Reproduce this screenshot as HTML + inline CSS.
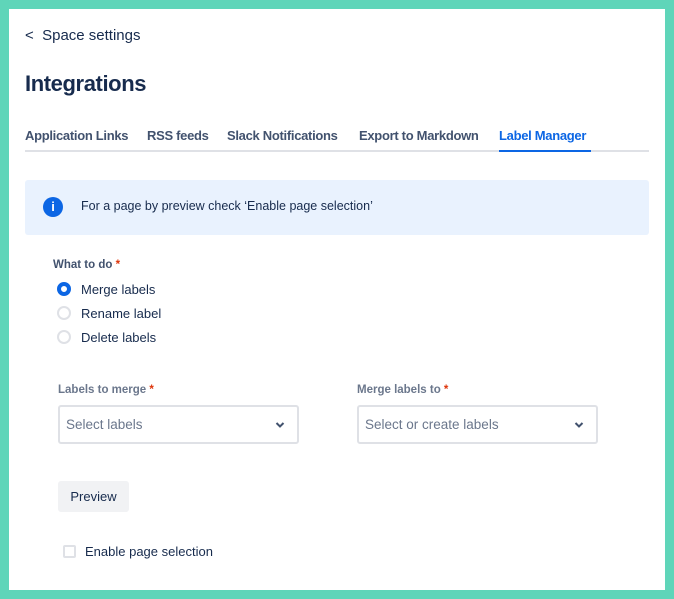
<!DOCTYPE html>
<html><head><style>
*{margin:0;padding:0;box-sizing:border-box}
body{width:674px;height:599px;background:#5fd5b9;font-family:"Liberation Sans",sans-serif;position:relative;overflow:hidden;color:#172b4d}
#p{position:absolute;left:9px;top:9px;width:656px;height:581px;background:#fff}
.a{position:absolute;white-space:nowrap}
.tab{position:absolute;top:128px;font-size:13px;color:#42526e;font-weight:bold;letter-spacing:-0.3px}
.r{position:absolute;width:14px;height:14px;border-radius:50%;border:2px solid #dfe1e6;left:57px}
.sel{position:absolute;top:405px;height:39px;border:2px solid #dfe1e6;border-radius:3px;font-size:13.5px;color:#6b778c;padding:10px 0 0 6px}
.lab{position:absolute;top:384px;font-size:11.5px;color:#6b778c;font-weight:bold}
.st{color:#de350b}
.t{font-size:13px}
</style></head><body>
<div id="p"></div>
<div class="a" style="left:25px;top:27px;font-size:15px;color:#172b4d">&lt;&nbsp; Space settings</div>
<div class="a" style="left:25px;top:71px;font-size:22px;font-weight:bold;color:#172b4d;letter-spacing:-0.4px">Integrations</div>
<div class="tab" style="left:25px">Application Links</div>
<div class="tab" style="left:147px">RSS feeds</div>
<div class="tab" style="left:227px">Slack Notifications</div>
<div class="tab" style="left:359px">Export to Markdown</div>
<div class="tab" style="left:499px;color:#0c66e4">Label Manager</div>
<div class="a" style="left:25px;top:150px;width:624px;height:2px;background:#dfe1e6"></div>
<div class="a" style="left:499px;top:150px;width:92px;height:2px;background:#0c66e4"></div>
<div class="a" style="left:25px;top:180px;width:624px;height:55px;background:#e9f2fe;border-radius:3px"></div>
<div class="a" style="left:43px;top:197px;width:20px;height:20px;border-radius:50%;background:#0c66e4;color:#fff;font-weight:bold;font-size:13px;text-align:center;line-height:20px">i</div>
<div class="a" style="left:81px;top:199px;font-size:12.5px;color:#172b4d">For a page by preview check ‘Enable page selection’</div>
<div class="a" style="left:53px;top:259px;font-size:11.5px;color:#42526e;font-weight:bold">What to do <span class="st">*</span></div>
<div class="r" style="top:282px;border:4px solid #0c66e4;background:#fff"></div>
<div class="r" style="top:306px"></div>
<div class="r" style="top:330px"></div>
<div class="a t" style="left:81px;top:282px">Merge labels</div>
<div class="a t" style="left:81px;top:306px">Rename label</div>
<div class="a t" style="left:81px;top:330px">Delete labels</div>
<div class="lab" style="left:58px">Labels to merge <span class="st">*</span></div>
<div class="lab" style="left:357px">Merge labels to <span class="st">*</span></div>
<div class="sel" style="left:58px;width:241px">Select labels<svg style="position:absolute;right:12px;top:14px" width="10" height="8" viewBox="0 0 10 8"><path d="M1.5 2l3.5 3.5L8.5 2" stroke="#42526e" stroke-width="2" fill="none"/></svg></div>
<div class="sel" style="left:357px;width:241px">Select or create labels<svg style="position:absolute;right:12px;top:14px" width="10" height="8" viewBox="0 0 10 8"><path d="M1.5 2l3.5 3.5L8.5 2" stroke="#42526e" stroke-width="2" fill="none"/></svg></div>
<div class="a" style="left:58px;top:481px;width:71px;height:31px;background:#f1f2f4;border-radius:3px;font-size:13px;color:#172b4d;text-align:center;line-height:31px">Preview</div>
<div class="a" style="left:63px;top:545px;width:13px;height:13px;border:2px solid #dfe1e6;border-radius:2px"></div>
<div class="a t" style="left:85px;top:544px">Enable page selection</div>
</body></html>
